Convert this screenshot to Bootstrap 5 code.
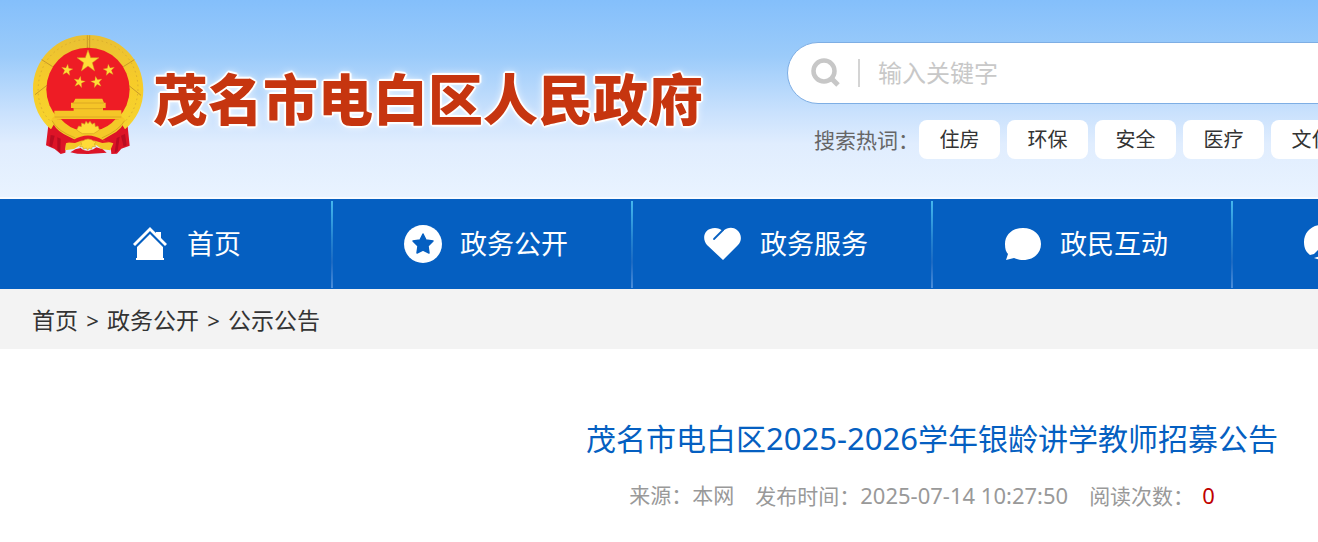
<!DOCTYPE html>
<html lang="zh-CN">
<head>
<meta charset="utf-8">
<meta name="viewport" content="width=device-width, initial-scale=1">
<title>茂名市电白区人民政府</title>
<link rel="stylesheet" href="https://cdn.jsdelivr.net/npm/bootstrap@5.3.0/dist/css/bootstrap.min.css">
<style>
  body { font-family: "Noto Sans", "Noto Sans CJK SC", sans-serif; background: #fff; color: #333; overflow-x: hidden; }
  a { color: inherit; text-decoration: none; }
  .page-wrap { width: 1800px; margin-left: 32px; }
  .site-head { background: linear-gradient(#84bffb 0, #9bcbfa 56px, #c9e1fd 112px, #e0edfe 144px, #e9f3ff 197px); border-bottom: 2px solid #f8fbff; height: 199px; overflow: hidden; }
  .brand-col { width: 755px; padding-top: 34px; }
  .emblem { width: 112px; height: 121px; }
  .site-name { font: 900 55px/64px "Noto Sans CJK SC", sans-serif; color: #c6350f; margin: 30px 0 0 9px;
    text-shadow: 2px 0 1px #fff, -2px 0 1px #fff, 0 2px 1px #fff, 0 -2px 1px #fff, 1px 1px 1px #fff, -1px -1px 1px #fff, 1px -1px 1px #fff, -1px 1px 1px #fff, 0 0 8px #fff; }
  .search-col { padding-top: 42px; }
  .search-box { height: 62px; border: 1px solid #7eaee4; border-radius: 31px; background: #fff; padding-left: 22px; }
  .search-bar { width: 2px; height: 28px; background: #d4d4d4; margin: 0 18px 0 16px; }
  .search-box input { border: 0; outline: 0; background: transparent; font-size: 24px; padding: 0; }
  .search-box input::placeholder { color: #c8c8c8; opacity: 1; }
  .hot-row { margin: 16px 0 0 27px; color: #666; font-size: 21px; line-height: 40px; }
  .hot-label { width: 105px; white-space: nowrap; }
  .hot-tags { gap: 7px; }
  .hot-tag { width: 81px; height: 39px; border-radius: 8px; background: #fff; color: #333; font-size: 20px; text-align: center; }
  .main-nav { background: #055fc1; height: 90px; overflow: hidden; color: #fff; }
  .main-nav ul { margin-left: 33px; }
  .main-nav li { width: 300px; height: 87px; margin-top: 2px; border-right: 2px solid; border-image: linear-gradient(#46b9ee, #2381cf 45%, #1b69c2 70%, #4b8fdc) 1; }
  .main-nav a { height: 86px; padding-left: 8px; gap: 18px; font-size: 27px; white-space: nowrap; }
  .main-nav svg { width: 38px; height: 38px; fill: #fff; }
  .crumbs { background: #f3f3f3; height: 60px; padding-top: 2px; font-size: 23px; }
  .crumbs span { width: 29px; text-align: center; font-size: 22px; }
  .article-title { font-size: 30px; line-height: 44px; color: #055fc1; font-weight: 400; margin: 67px 0 0; }
  .title-year { font-size: 31px; }
  .meta-row { font-size: 21px; line-height: 32px; color: #999; margin-top: 18px; padding-right: 20px; gap: 21px; }
  .meta-row time, .reads { font-size: 22px; }
  .reads { color: #c00000; margin-left: 8px; }
</style>
</head>
<body>
<header class="site-head">
  <div class="page-wrap d-flex">
    <a href="#" class="brand-col d-flex align-items-start flex-shrink-0">
      <svg class="emblem flex-shrink-0" viewBox="36 42 336 363" aria-hidden="true">
        <defs>
          <linearGradient id="gold" x2="0" y2="1"><stop stop-color="#e9c034"/><stop offset=".5" stop-color="#f7cc29"/><stop offset="1" stop-color="#f6d42e"/></linearGradient>
          <path id="star" d="M0-34 8-11 33-11 13 4 20 29 0 14-20 29-13 4-33-11-8-11Z"/>
        </defs>
        <path fill="#dd1427" d="M88 290 78 376 104 387 122 402 136 398 138 372H271L274 402 291 401 304 386 329 377 320 290Z"/>
        <path fill="#b90c21" d="M92 345 88 377 96 381 104 347ZM112 352 112 389 121 399 122 356ZM315 342 320 376 311 380 303 347ZM290 354 284 399 293 393 299 350Z"/>
        <path fill="url(#gold)" d="M204 45C111 45 39 118 39 209c0 49 21 91 54 119l18-30h185l19 30c34-30 55-70 55-119C370 118 297 45 204 45Z"/>
        <g fill="none" stroke="#c99a28" stroke-width="3"><path d="M202 46v38M209 46v38M65 119l33 21M343 119l-33 21M45 224l37-29M363 226l-36-29"/><path stroke="#dcb02e" stroke-dasharray="5 9" d="M89 301C38 252 43 144 106 94 168 43 255 49 307 96c62 54 60 157 9 207"/></g>
        <circle cx="204" cy="208" r="125" fill="#ee1c25"/>
        <g fill="#ffdc37" stroke="#d49a20" stroke-width="1.5">
          <use href="#star" transform="translate(204 124)"/>
          <use href="#star" transform="translate(141 150) rotate(8) scale(.52)"/>
          <use href="#star" transform="translate(267 150) rotate(-8) scale(.52)"/>
          <use href="#star" transform="translate(178 186) rotate(12) scale(.52)"/>
          <use href="#star" transform="translate(230 186) rotate(-12) scale(.52)"/>
        </g>
        <path fill="#f5c527" d="M166 236H247L252 248H257V264H249V271H304V289L314 298H94L103 289V272H161V264H153V248H160Z"/>
        <path stroke="#d29b20" stroke-width="2" d="M158 249h94M161 266h87M104 291h200"/>
        <path fill="#ee1c25" d="M117 298H293L263 322H147Z"/>
        <path fill="#f4c928" d="M94 297 123 298Q147 325 180 331L204 339 229 331Q265 324 286 298L316 297Q309 327 274 344L247 360 280 370 271 391 246 388 229 376H181L162 387 135 391 138 370 165 359 131 342Q102 326 94 297Z"/>
        <path fill="#e61a25" d="M160 360Q204 333 248 360L273 366 247 369 225 362H183L165 369 137 367Z"/>
        <path fill="#ffdb37" stroke="#d6a124" stroke-width="2" d="M170 330 176 318 184 320 185 309 194 313 198 304 204 311 210 304 216 313 224 309 226 320 234 318 238 330 221 341H187Z"/>
        <path fill="#ffdb37" stroke="#d6a124" stroke-width="2" d="M182 364 190 362 195 359 204 357 214 359 220 363 229 365 223 372 227 380 217 380 214 388 207 384 203 391 199 384 190 388 188 380 179 381 185 373Z"/>
        <path fill="#dc1527" d="M151 397 166 388 182 384 190 390 204 393 220 388 229 382 248 388 260 398 239 400 204 402 172 401Z"/>
        <path fill="none" stroke="#c99520" stroke-width="2" d="M96 302Q110 332 166 354M314 302Q296 332 245 354"/>
      </svg>
      <h1 class="site-name text-nowrap">茂名市电白区人民政府</h1>
    </a>
    <div class="search-col flex-grow-1">
      <form class="search-box d-flex align-items-center" role="search">
        <svg width="32" height="32" viewBox="0 0 32 32" fill="none" stroke="#c7c7c7" aria-hidden="true"><circle cx="14" cy="14" r="10.5" stroke-width="4.5"/><path d="m21 21 7 7" stroke-width="5"/></svg>
        <span class="search-bar"></span>
        <input type="text" class="flex-grow-1" placeholder="输入关键字" aria-label="输入关键字">
      </form>
      <div class="hot-row d-flex">
        <span class="hot-label">搜索热词：</span>
        <div class="hot-tags d-flex">
          <a href="#" class="hot-tag">住房</a><a href="#" class="hot-tag">环保</a><a href="#" class="hot-tag">安全</a><a href="#" class="hot-tag">医疗</a><a href="#" class="hot-tag">文化</a>
        </div>
      </div>
    </div>
  </div>
</header>
<nav class="main-nav">
  <ul class="page-wrap d-flex list-unstyled mb-0">
    <li><a href="#" class="d-flex align-items-center justify-content-center"><svg viewBox="0 0 38 38" aria-hidden="true"><path d="M19 2 25 8V7H30V13L36 19 34 21 19 6 4 21 2 19Z"/><path d="M19 9 32 22V33H33V35H5V33H6V22Z"/></svg>首页</a></li>
    <li><a href="#" class="d-flex align-items-center justify-content-center"><svg viewBox="0 0 38 38" aria-hidden="true"><circle cx="19" cy="19" r="19"/><path fill="#055fc1" stroke="#055fc1" stroke-width="1.5" stroke-linejoin="round" d="m19 9 3 6 7 1-5 5 1 7-6-3-6 3 1-7-5-5 7-1Z"/></svg>政务公开</a></li>
    <li><a href="#" class="d-flex align-items-center justify-content-center"><svg viewBox="0 0 38 38" aria-hidden="true"><path d="M19 35 3 20C-2 14 0 6 6 4 11 2 15 3 19 6 24 2 29 2 33 5 38 9 38 16 34 20Z"/><path d="m19 5-9 9" stroke="#055fc1" stroke-width="1.8" stroke-linecap="round"/></svg>政务服务</a></li>
    <li><a href="#" class="d-flex align-items-center justify-content-center"><svg viewBox="0 0 38 38" aria-hidden="true"><path d="M19 3C8 3 1 10 1 19c0 5 1 8 3 10L2 35l8-2c3 1 6 2 9 2 11 0 18-7 18-16S30 3 19 3Z"/></svg>政民互动</a></li>
    <li><a href="#" class="d-flex align-items-center justify-content-center" aria-label="更多"><svg viewBox="0 0 38 38" aria-hidden="true"><path d="M18 0C7 0 0 8 0 17c0 6 2 10 6 13l4-1 4-4 8 2 9-5V9C28 3 24 0 18 0ZM10 33l6-2v4Z"/></svg><span class="invisible">数据发布</span></a></li>
  </ul>
</nav>
<div class="crumbs">
  <nav class="page-wrap h-100 d-flex align-items-center" aria-label="当前位置">
    <a href="#">首页</a><span>&gt;</span><a href="#">政务公开</a><span>&gt;</span><a href="#">公示公告</a>
  </nav>
</div>
<main class="page-wrap">
  <h2 class="article-title text-center">茂名市电白区<span class="title-year">2025-2026</span>学年银龄讲学教师招募公告</h2>
  <div class="meta-row d-flex justify-content-center">
    <span>来源：本网</span>
    <span>发布时间：<time>2025-07-14 10:27:50</time></span>
    <span>阅读次数：<b class="reads fw-normal">0</b></span>
  </div>
</main>
<script src="https://cdn.jsdelivr.net/npm/bootstrap@5.3.0/dist/js/bootstrap.bundle.min.js"></script>
</body>
</html>
